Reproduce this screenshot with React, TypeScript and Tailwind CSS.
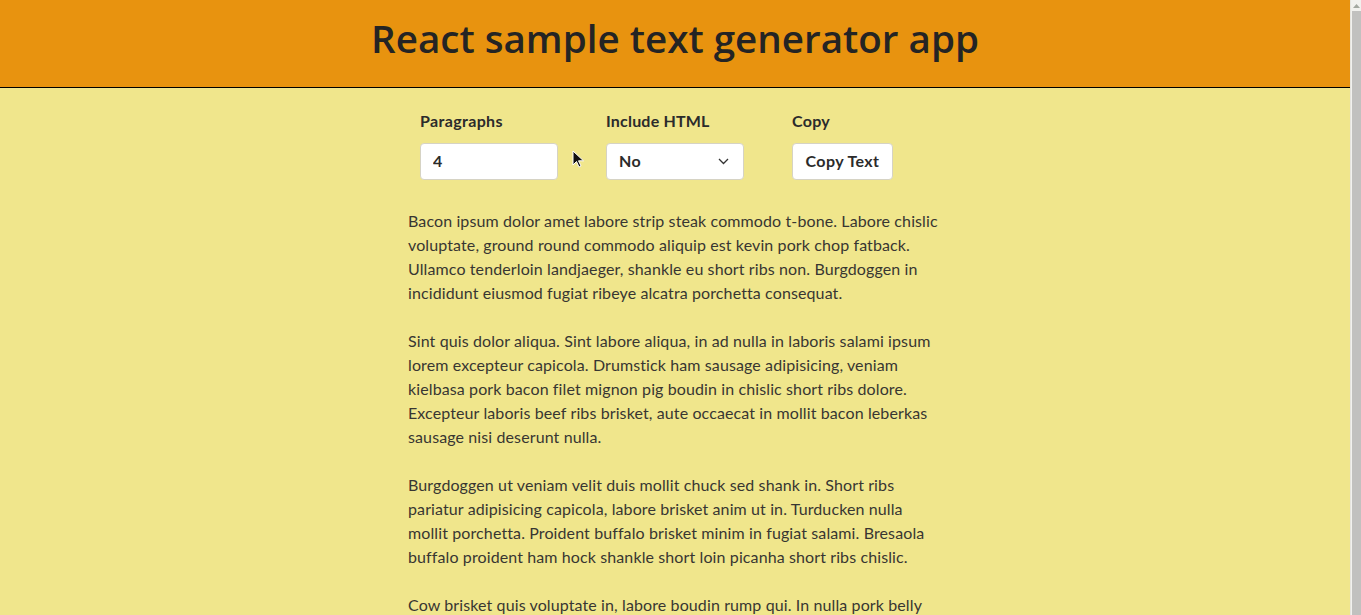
const paragraphs = [
  "Bacon ipsum dolor amet labore strip steak commodo t-bone. Labore chislic voluptate, ground round commodo aliquip est kevin pork chop fatback. Ullamco tenderloin landjaeger, shankle eu short ribs non. Burgdoggen in incididunt eiusmod fugiat ribeye alcatra porchetta consequat.",
  "Sint quis dolor aliqua. Sint labore aliqua, in ad nulla in laboris salami ipsum lorem excepteur capicola. Drumstick ham sausage adipisicing, veniam kielbasa pork bacon filet mignon pig boudin in chislic short ribs dolore. Excepteur laboris beef ribs brisket, aute occaecat in mollit bacon leberkas sausage nisi deserunt nulla.",
  "Burgdoggen ut veniam velit duis mollit chuck sed shank in. Short ribs pariatur adipisicing capicola, labore brisket anim ut in. Turducken nulla mollit porchetta. Proident buffalo brisket minim in fugiat salami. Bresaola buffalo proident ham hock shankle short loin picanha short ribs chislic.",
  "Cow brisket quis voluptate in, labore boudin rump qui. In nulla pork belly ex, tongue cupim irure ham hock. Jowl frankfurter pork loin, kevin ribeye sirloin meatball tail dolore, pancetta swine ut andouille.",
];

const App = () => {
  return (
    <div className="flex bg-[#f0e68c] font-['Lato',sans-serif] text-[#2b2b2b]">
      <div className="min-h-screen min-w-0 flex-1">
        <header className="h-[88px] border-b border-black bg-[#e8930f] pt-[14px] text-center">
          <h1 className="font-['Open_Sans',sans-serif] text-[38.6px] font-semibold leading-[48px] text-[#242424]">
            React sample text generator app
          </h1>
        </header>

        <main className="mx-auto w-[534px] pb-10">
          <div className="relative flex gap-[48px] pl-3 pt-[21px]">
            <div className="flex flex-col">
              <label className="mb-[10px] text-base font-bold leading-6 tracking-[0.35px]">Paragraphs</label>
              <input
                type="number"
                defaultValue={4}
                className="h-[37px] w-[138px] rounded-[4px] border border-[#d6d3c4] bg-white px-3 pb-[2px] text-base font-bold outline-none [appearance:textfield]"
              />
            </div>

            <div className="flex flex-col">
              <label className="mb-[10px] text-base font-bold leading-6 tracking-[0.2px]">Include HTML</label>
              <div className="relative">
                <select className="h-[37px] w-[138px] appearance-none rounded-[4px] border border-[#d6d3c4] bg-white px-3 pb-[2px] text-base font-bold tracking-[0.3px] outline-none">
                  <option>No</option>
                  <option>Yes</option>
                </select>
                <svg
                  className="pointer-events-none absolute right-[15px] top-[15px]"
                  width="11"
                  height="7"
                  viewBox="0 0 11 7"
                  fill="none"
                  stroke="#333"
                  strokeWidth="1.3"
                >
                  <path d="M1 1l4.5 4.5L10 1" />
                </svg>
              </div>
            </div>

            <div className="flex flex-col">
              <label className="mb-[10px] text-base font-bold leading-6 tracking-[0.3px]">Copy</label>
              <button className="h-[37px] w-[101px] rounded-[4px] border border-[#d6d3c4] bg-white pb-[2px] text-base font-bold tracking-[0.4px]">
                Copy Text
              </button>
            </div>

            {/* mouse pointer caught in the screenshot */}
            <svg className="absolute left-[164px] top-[62px]" width="12" height="18" viewBox="0 0 12 18">
              <path d="M1 1v14l3.5-3.5 2.5 5.5 2-1-2.5-5.2h5z" fill="#111" stroke="#fff" strokeWidth="1" />
            </svg>
          </div>

          <div className="mt-[29px] space-y-6 text-base leading-6 tracking-[0.11px] text-[#383632]">
            {paragraphs.map((p, i) => (
              <p key={i}>{p}</p>
            ))}
          </div>
        </main>
      </div>

      {/* browser scrollbar */}
      <aside className="sticky top-0 flex h-screen w-[11px] shrink-0 flex-col border-l border-[#e6e5df] bg-[#f1f1ee]">
        <div className="flex h-[11px] items-center justify-center">
          <svg width="7" height="4" viewBox="0 0 7 4">
            <path d="M0 4L3.5 0 7 4z" fill="#a3a8a0" />
          </svg>
        </div>
        <div className="ml-px flex-1 bg-[#c1c1bf]" />
      </aside>
    </div>
  );
};

export default App;
